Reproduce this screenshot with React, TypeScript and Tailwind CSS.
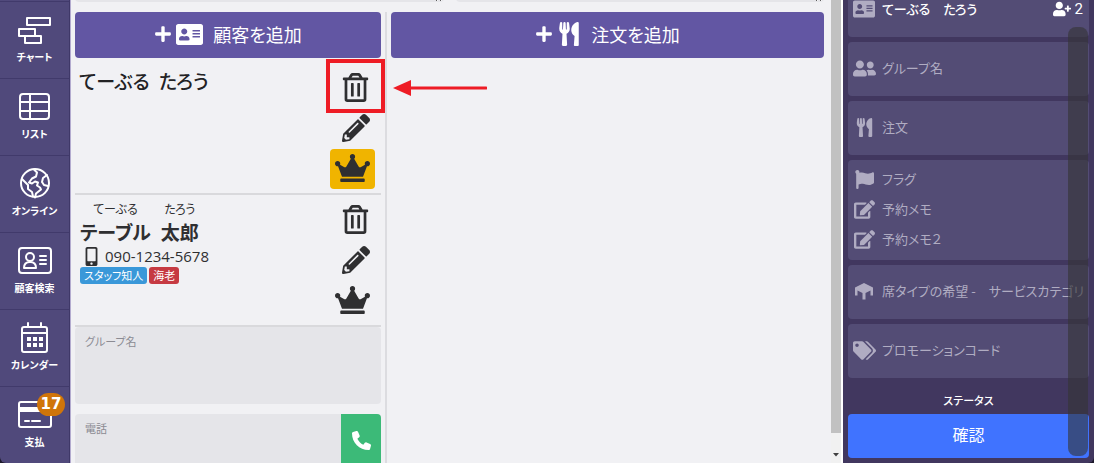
import type { ReactNode } from "react";
import {
  FaAddressCard,
  FaCrown,
  FaEdit,
  FaFlag,
  FaMobileAlt,
  FaPencilAlt,
  FaPlus,
  FaRegTrashAlt,
  FaTags,
  FaUserFriends,
  FaUserPlus,
  FaUtensils,
} from "react-icons/fa";
import { FaPhone } from "react-icons/fa6";

function LineIcon({ children }: { children: ReactNode }) {
  return (
    <svg viewBox="0 0 36 32" className="h-8 w-9" fill="none" stroke="currentColor" strokeWidth="2" strokeLinejoin="round" strokeLinecap="round" aria-hidden="true">
      {children}
    </svg>
  );
}

const navItems = [
  {
    label: "チャート",
    icon: (
      <LineIcon>
        <path d="M10 4h23v7H10zM2 15h16v7H2zM8 22h16v7H8z" />
      </LineIcon>
    ),
  },
  {
    label: "リスト",
    icon: (
      <LineIcon>
        <rect x="3" y="3" width="29" height="25" rx="3" />
        <path d="M13 3v25M3 11h29M3 20h29" />
      </LineIcon>
    ),
  },
  {
    label: "オンライン",
    icon: (
      <LineIcon>
        <circle cx="18" cy="15" r="14" />
        <path d="M17 1.500l3 3-1 4-4 2-3 4 3 1 3-2 3 1-1 3 3 2 1 2-5 4-1 4M5 11l6 6v4l4 3 1 4.500M30 7l-4 3-1 4 2 3 4 1" />
      </LineIcon>
    ),
  },
  {
    label: "顧客検索",
    icon: (
      <LineIcon>
        <rect x="2" y="3" width="32" height="25" rx="3" />
        <circle cx="13" cy="12" r="4" />
        <path d="M7 23c0-4 2-6 6-6s6 2 6 6zM23 11h6M23 15h6M23 19h6" />
      </LineIcon>
    ),
  },
  {
    label: "カレンダー",
    icon: (
      <LineIcon>
        <rect x="5" y="5" width="25" height="25" rx="2" />
        <path d="M5 11h25M11 1v4M24 1v4" />
        <path d="M10 17h4M16 17h4M22 17h4M10 23h4M16 23h4M22 23h4" strokeWidth="4" strokeLinecap="butt" />
      </LineIcon>
    ),
  },
  {
    label: "支払",
    badge: "17",
    icon: (
      <LineIcon>
        <rect x="2" y="3" width="32" height="25" rx="2" />
        <path d="M2 10.500h32" strokeWidth="5" strokeLinecap="butt" />
        <path d="M8 22h4M15 22h8" />
      </LineIcon>
    ),
  },
];

function PicnicTable() {
  return (
    <svg viewBox="0 0 20 18" className="h-[18px] w-5" fill="currentColor" aria-hidden="true">
      <path d="M10 1l9 4.500v8h-2.500V8.500L11.500 11v6.500h-3V11L3.500 8.500v5H1v-8z" />
    </svg>
  );
}

function Sidebar() {
  return (
    <nav className="w-[70px] shrink-0 overflow-hidden rounded-bl-md border-r border-[#3f3868] bg-[#50497b] pt-px text-white">
      {navItems.map((item) => (
        <a key={item.label} href="#" className="flex h-[77px] flex-col items-center border-t border-[#413a6b] pt-3">
          <span className="relative">
            {item.icon}
            {item.badge && (
              <span className="absolute -top-1.5 left-5 rounded-full bg-[#d0750a] px-1 font-[DejaVu_Sans,sans-serif] text-[15px] leading-[23px] font-bold">
                {item.badge}
              </span>
            )}
          </span>
          <span className="mt-[3px] text-[10px] leading-4 font-bold whitespace-nowrap">{item.label}</span>
        </a>
      ))}
    </nav>
  );
}

function AddButton({ icon, label }: { icon: ReactNode; label: string }) {
  return (
    <button className="flex h-[46px] w-full items-center justify-center rounded bg-[#6256a3] pb-0.5 text-lg text-white">
      <FaPlus className="mr-1" />
      {icon}
      <span className="ml-2.5">{label}</span>
    </button>
  );
}

function Callout() {
  return (
    <span className="pointer-events-none absolute -top-2 -left-1 flex items-center">
      <span className="h-[54px] w-[59px] shrink-0 border-4 border-[#ee1c25]" />
      <svg viewBox="0 0 94 16" className="mt-1 ml-2 h-4 w-[94px] shrink-0" aria-hidden="true">
        <path d="M0 8L18 0v16z" fill="#ee1c25" />
        <path d="M16 8h77" stroke="#ee1c25" strokeWidth="3" strokeLinecap="round" />
      </svg>
    </span>
  );
}

function CustomerActions({ vip, callout }: { vip?: boolean; callout?: boolean }) {
  return (
    <div className="mr-1.5 flex w-[45px] flex-col gap-px text-[#2f2f31]">
      <div className="relative">
        <button aria-label="削除" className="flex h-10 w-full items-center justify-center pl-1.5">
          <FaRegTrashAlt size={29} />
        </button>
        {callout && <Callout />}
      </div>
      <button aria-label="編集" className="flex h-10 w-full items-center justify-center pl-1.5">
        <FaPencilAlt size={28} />
      </button>
      <button
        aria-label="VIP"
        className={vip ? "flex h-10 items-center justify-center rounded bg-[#f0b400] pb-0.5" : "flex h-10 items-center justify-center pb-0.5"}
      >
        <FaCrown size={35} className="h-7" />
      </button>
    </div>
  );
}

function Customers() {
  return (
    <section className="w-[306px] shrink-0">
      <AddButton icon={<FaAddressCard size={27} />} label="顧客を追加" />
      <div className="flex justify-between border-b-2 border-[#d9d9dc] pt-[9px] pb-1">
        <h2 className="pl-1 text-[19px] leading-7 font-medium text-[#222224]">てーぶる&ensp;たろう</h2>
        <CustomerActions vip callout />
      </div>
      <div className="flex justify-between border-b-2 border-[#d9d9dc] py-1">
        <div className="pl-[5px] text-[#2f2f31]">
          <h2 className="flex gap-2.5 text-[19px] leading-[26px] font-bold">
            <ruby className="flex flex-col-reverse items-center">
              テーブル<rt className="text-xs leading-5 font-normal">てーぶる</rt>
            </ruby>
            <ruby className="flex flex-col-reverse items-center">
              太郎<rt className="text-xs leading-5 font-normal">たろう</rt>
            </ruby>
          </h2>
          <p className="flex items-center pl-0.5 font-[Open_Sans,sans-serif] text-[15px] leading-[22px]">
            <FaMobileAlt size={19} className="mr-1" />
            090-1234-5678
          </p>
          <p className="flex gap-0.5 text-[11px] leading-[17px] text-white">
            <span className="rounded-[3px] bg-[#3a98d9] px-1">スタッフ知人</span>
            <span className="rounded-[3px] bg-[#c63a42] px-1">海老</span>
          </p>
        </div>
        <CustomerActions />
      </div>
      <div className="rounded bg-[#e5e5e9] px-2.5 pt-1 pb-1.5">
        <label htmlFor="group" className="block text-[11px] leading-5 text-[#8b8b93]">
          グループ名
        </label>
        <textarea id="group" className="block h-[47px] w-full resize-none bg-transparent outline-none" />
      </div>
      <div className="mt-2.5 flex h-14 overflow-hidden rounded bg-[#e5e5e9]">
        <div className="flex-1 px-2.5 pt-1">
          <label htmlFor="tel" className="block text-[11px] leading-5 text-[#8b8b93]">
            電話
          </label>
          <input id="tel" type="tel" className="h-6 w-full bg-transparent outline-none" />
        </div>
        <button aria-label="電話をかける" className="flex w-10 items-center justify-center bg-[#3cba78] pb-1 text-white">
          <FaPhone size={19} />
        </button>
      </div>
    </section>
  );
}

function Card({ children }: { children: ReactNode }) {
  return <button className="block w-full rounded bg-[#534c75] pt-[11px] pb-[13px] pl-1 text-left text-[#b0acc2]">{children}</button>;
}

function Line({ icon, children }: { icon: ReactNode; children: ReactNode }) {
  return (
    <span className="flex h-[30px] items-center gap-1.5 text-[13px] whitespace-nowrap">
      <span className="flex w-6 shrink-0 justify-center">{icon}</span>
      {children}
    </span>
  );
}

function Summary() {
  return (
    <aside className="relative flex w-[251px] shrink-0 flex-col gap-[5px] overflow-hidden rounded-br-md bg-[#41375f] px-[5px]">
      <button className="-mt-4 block w-full rounded bg-[#534c75] pt-2.5 pb-[13px] pl-1 text-left text-[#b0acc2]">
        <Line icon={<FaAddressCard size={22} />}>
          <span className="flex-1 leading-5 font-medium text-white">てーぶる　たろう</span>
          <span className="flex items-center gap-1 pr-1.5 font-[Roboto,sans-serif] text-[15px] leading-4 text-white">
            <FaUserPlus size={18} />2
          </span>
        </Line>
      </button>
      <Card>
        <Line icon={<FaUserFriends size={23} />}>グループ名</Line>
      </Card>
      <Card>
        <Line icon={<FaUtensils size={19} />}>注文</Line>
      </Card>
      <button className="block w-full rounded bg-[#534c75] pt-1 pb-1.5 pl-1 text-left text-[#b0acc2]">
        <Line icon={<FaFlag size={19} />}>フラグ</Line>
        <Line icon={<FaEdit size={21} />}>予約メモ</Line>
        <Line icon={<FaEdit size={21} />}>予約メモ２</Line>
      </button>
      <Card>
        <Line icon={<PicnicTable />}>席タイプの希望 -　サービスカテゴリ</Line>
      </Card>
      <Card>
        <Line icon={<FaTags size={23} />}>プロモーションコード</Line>
      </Card>
      <div className="pt-2 text-center text-white">
        <p id="status" className="text-[11px] leading-[18px] font-medium">
          ステータス
        </p>
        <button aria-describedby="status" className="mt-[5px] h-11 w-full rounded bg-[#4073ff] pb-1 text-base">
          確認
        </button>
      </div>
      <div className="absolute top-[27px] right-1.5 bottom-[7px] w-5 rounded-lg bg-[#333333]/60" />
    </aside>
  );
}

export default function App() {
  return (
    <div className="flex h-screen overflow-hidden bg-[#1d1a2b] font-[Noto_Sans_CJK_JP,sans-serif] [font-feature-settings:'palt']">
      <Sidebar />
      <main className="min-w-0 flex-1 overflow-hidden border-l border-[#b3abcf] bg-[#f1f1f4] pr-[7px] pl-1">
        <div className="flex h-0.5 items-end gap-3 overflow-hidden">
          <textarea aria-label="メモ" className="h-16 min-w-0 flex-1 shrink-0 rounded bg-[#e5e5e9]" />
          <textarea aria-label="メモ２" className="h-16 min-w-0 flex-1 shrink-0 rounded bg-[#e5e5e9]" />
        </div>
        <div className="mt-2.5 flex">
          <Customers />
          <section className="ml-1 min-w-0 flex-1 border-l-2 border-[#dcdce0] pl-1">
            <AddButton icon={<FaUtensils size={24} />} label="注文を追加" />
          </section>
        </div>
      </main>
      <div className="flex w-3 shrink-0 flex-col border-r-2 border-white bg-[#f1f1f1]" aria-hidden="true">
        <div className="flex-1 bg-[#c1c1c1]" />
        <div className="flex h-[30px] items-end justify-center pb-1.5">
          <svg viewBox="0 0 6 4" className="h-1 w-1.5">
            <path d="M0 0h6L3 3.500z" fill="#404040" />
          </svg>
        </div>
      </div>
      <Summary />
    </div>
  );
}
